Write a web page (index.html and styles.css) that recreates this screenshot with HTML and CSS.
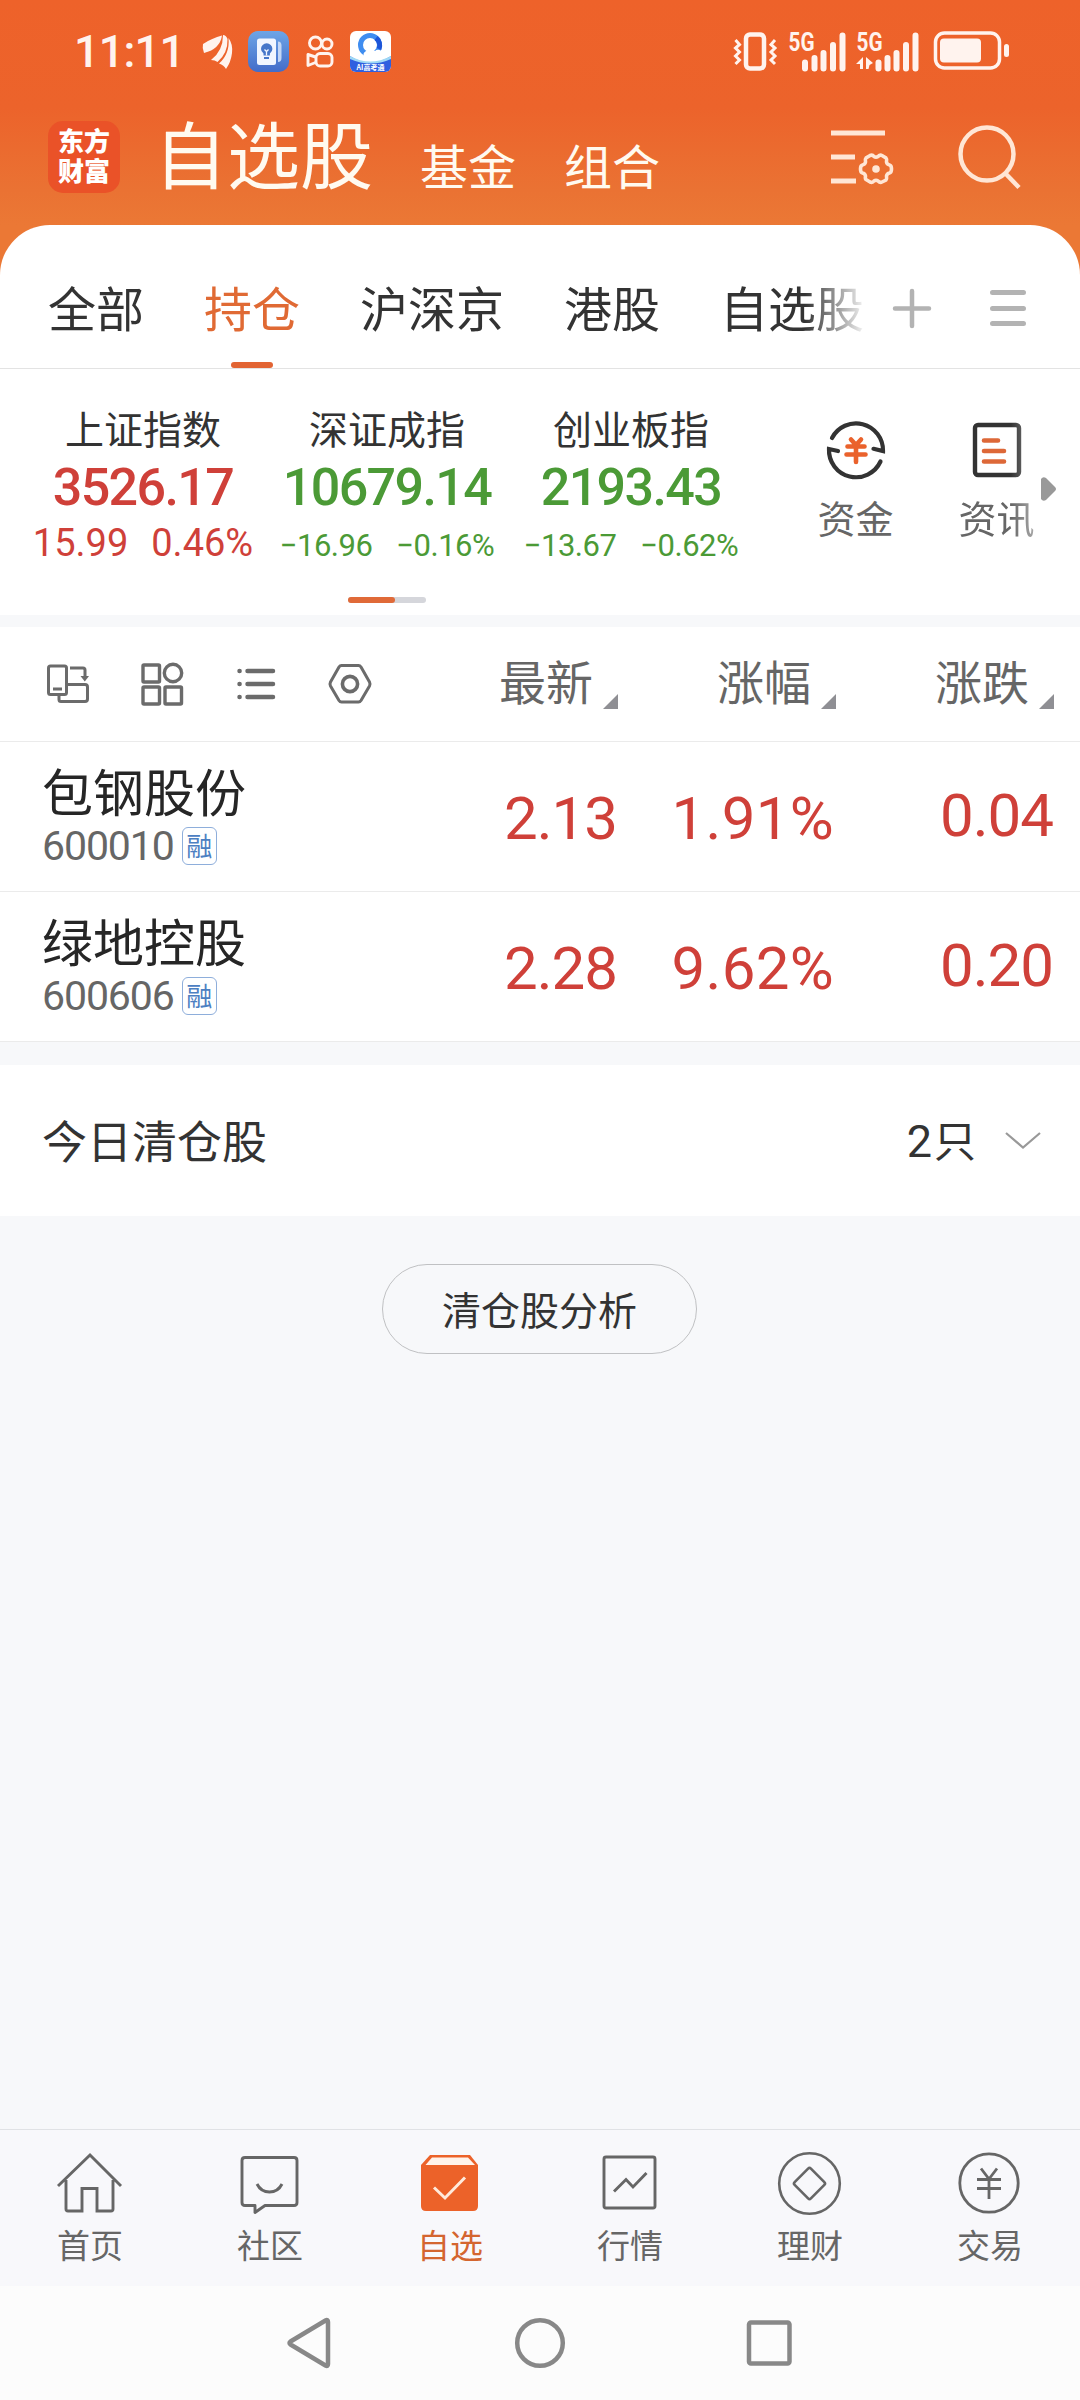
FILE: index.html
```html
<!DOCTYPE html>
<html lang="zh-CN">
<head>
  <meta charset="UTF-8" />
  <meta name="viewport" content="width=device-width, initial-scale=1" />
  <title>自选股</title>
  <link rel="stylesheet" href="styles.css">
</head>
<body>
  <header class="header">
    <div class="status-bar">
      <span class="time">11:11</span>
      <svg class="st-wing" width="30" height="36" viewBox="0 0 30 36" fill="#fff3ee">
        <path d="M0 10Q9 4 19 1.500Q17 15 1 19Q-1 14 0 10Z"/>
        <path d="M8 26Q20 17 20 1Q23 1 24.500 5Q25 19 14.500 28Q12 26 8 26Z"/>
        <path d="M16 29.500Q27 20 25.500 4Q30 10 29 19Q28 28 23 35Q21 31 16 29.500Z"/>
      </svg>
      <svg class="st-note" width="41" height="41" viewBox="0 0 41 41">
        <defs><linearGradient id="blue" x1="0" y1="0" x2="0" y2="1"><stop offset="0" stop-color="#6ea5e6"/><stop offset="1" stop-color="#426cc9"/></linearGradient></defs>
        <rect width="41" height="41" rx="10" fill="url(#blue)"/>
        <path d="M30 10.500q3.500 0 3.500 4v12.500q0 4-3.500 4z" fill="#c3d7f6"/>
        <rect x="9" y="7.500" width="19" height="26.500" rx="2.500" fill="#f1f6ff"/>
        <path d="M15.500 24.500v-2q-2.500-2-2.500-4.500a5.700 5.700 0 0 1 11.400 0q0 2.500-2.500 4.500v2zM16 26h5v2h-5z" fill="#4677c9"/>
        <path d="M16.500 18.500l2 2 2-2M18.500 20.500v4" stroke="#f1f6ff" stroke-width="1.300" fill="none"/>
      </svg>
      <svg class="st-cam" width="28" height="33" viewBox="0 0 28 33" fill="none" stroke="#fff3ee" stroke-width="2.900">
        <circle cx="9.500" cy="8" r="6"/><circle cx="21" cy="9" r="5"/>
        <rect x="10" y="18.500" width="16" height="12.500" rx="4"/>
        <path d="M9.500 22L2 19.500v11l7.500-3" stroke-linejoin="round"/>
      </svg>
      <svg class="st-ai" width="41" height="41" viewBox="0 0 41 41">
        <defs><clipPath id="aiBox"><rect width="41" height="41" rx="6"/></clipPath></defs>
        <g clip-path="url(#aiBox)">
          <rect width="41" height="41" fill="#fff"/>
          <path d="M0 25q20 13 41 0v16H0z" fill="#2f5fe0"/>
          <path d="M0 25q20 11 41 0v3q-20 9-41 0z" fill="#9fd8f5"/>
          <circle cx="20" cy="14" r="9.500" fill="none" stroke="#3f8df0" stroke-width="5"/>
          <path d="M26 7a9.500 9.500 0 0 1 3 11" fill="none" stroke="#1d55d8" stroke-width="5"/>
          <path d="M15 26a9 5 0 0 1 1-6 6 6 0 0 1 9 0 4 4 0 0 1 6 6z" fill="#fff"/>
        </g>
        <text x="20.500" y="38.500" text-anchor="middle" class="ai-text">AI高考通</text>
      </svg>
      <svg class="st-signal" width="276" height="41" viewBox="734 31 276 41" fill="none" stroke="#fff3ee">
        <rect x="746" y="34.500" width="18" height="34" rx="4" stroke-width="4.500"/>
        <path d="M735.500 40l4 4.500-4 3.500 4 4-4 4 4 4-4 4M775 40l-4 4.500 4 3.500-4 4 4 4-4 4 4 4" stroke-width="3"/>
        <path d="M805 62.500v6M814.500 58v10.500M823.500 53v15.500M833 45v23.500M842.500 35.500v33" stroke-width="6" stroke-linecap="round"/>
        <path d="M878.500 62.500v6M887.500 58v10.500M896.500 53v15.500M906 45v23.500M915.500 35.500v33" stroke-width="6" stroke-linecap="round"/>
        <path d="M856 64l7-7v12h-3v-5zM873 63l-7-6v12h2.500l1-4z" fill="#fff3ee" stroke="none"/>
        <rect x="935.500" y="33" width="64" height="35" rx="9" stroke-width="3.500"/>
        <rect x="940" y="38.500" width="41" height="24" rx="4" fill="#fff3ee" stroke="none"/>
        <rect x="1004" y="44" width="5" height="13" rx="2.500" fill="#fff3ee" stroke="none"/>
        <text x="788.500" y="50.500" textLength="26" lengthAdjust="spacingAndGlyphs" class="net">5G</text>
        <text x="856.500" y="50.500" textLength="26" lengthAdjust="spacingAndGlyphs" class="net">5G</text>
      </svg>
    </div>
    <div class="title-bar">
      <div class="logo"><span>东方</span><span>财富</span></div>
      <nav class="titles">
        <h1>自选股</h1>
        <span>基金</span>
        <span>组合</span>
      </nav>
      <svg class="ic-setting" width="64" height="58" viewBox="831 129 64 58" fill="none" stroke="#ffe6d5" stroke-width="5">
        <path d="M831 133h54M831 157h24M831 181h25"/>
        <path d="M870 155.500q2.500-1 4 1 2 1.500 4 0 2-2 4-1l4 2.500q1 1 .5 4 .5 2.500 3 3 2 .5 2 4t-2 4q-2.500.500-3 3 .5 3-.5 4l-4 2q-2 1-4-1-2-1.500-4 0-1.500 2-4 1l-4-2.500q-1-.5-.5-3.500-.5-2.500-3-3-2-.5-2-4t2-4q2.500-.5 3-3-.5-3 .5-4z" stroke-width="3.600"/>
        <circle cx="876" cy="169" r="3.800" fill="#ffe6d5" stroke="none"/>
      </svg>
      <svg class="ic-search" width="63" height="66" viewBox="958 124 63 66" fill="none" stroke="#ffe6d5" stroke-width="4.500">
        <circle cx="987" cy="154" r="26.500"/><path d="M1005 173l14 14.500"/>
      </svg>
    </div>
  </header>

  <main class="sheet">
    <div class="tabs">
      <div class="tab-list">
        <span>全部</span>
        <span class="active">持仓</span>
        <span>沪深京</span>
        <span>港股</span>
        <span>自选股</span>
      </div>
      <svg class="ic-plus" width="40" height="40" viewBox="0 0 40 40" stroke="#b3b3b3" stroke-width="4.500" stroke-linecap="round"><path d="M20 3v35M3 20.500h34"/></svg>
      <svg class="ic-menu" width="36" height="38" viewBox="0 0 36 38" stroke="#b3b3b3" stroke-width="5" stroke-linecap="round"><path d="M2.500 3.500h31M2.500 19.500h31M2.500 34.500h31"/></svg>
    </div>

    <section class="indices">
      <div class="index-list">
        <div class="index up">
          <div class="name">上证指数</div>
          <div class="value">3526.17</div>
          <div class="change big"><span>15.99</span><span>0.46%</span></div>
        </div>
        <div class="index down">
          <div class="name">深证成指</div>
          <div class="value">10679.14</div>
          <div class="change"><span>−16.96</span><span>−0.16%</span></div>
        </div>
        <div class="index down">
          <div class="name">创业板指</div>
          <div class="value">2193.43</div>
          <div class="change"><span>−13.67</span><span>−0.62%</span></div>
        </div>
      </div>
      <div class="shortcuts">
        <div class="shortcut">
          <svg width="60" height="62" viewBox="826 419 60 62" fill="none" stroke="#333" stroke-width="4.200" stroke-linecap="round">
            <path d="M832 438a27 27 0 0 1 51 13l-9.500-2.200"/>
            <path d="M880.500 461.500a27 27 0 0 1-51.500-12.500l9 2"/>
            <path d="M851 439.500l5 5.500 5-5.500M847.500 446.500h17M846.500 454.500h19M856 446v16" stroke="#ea622c" stroke-width="4.600"/>
          </svg>
          <span>资金</span>
        </div>
        <div class="shortcut fade">
          <svg width="60" height="62" viewBox="967 419 60 62" fill="none" stroke="#333" stroke-width="4.400" stroke-linecap="round">
            <rect x="975" y="425" width="44" height="50" rx="3"/>
            <path d="M984 440.500h14M984 451h20M984 461.500h20" stroke="#dd6838" stroke-width="4.600"/>
          </svg>
          <span>资讯</span>
        </div>
      </div>
      <svg class="ic-more" width="16" height="26" viewBox="0 0 16 26"><path d="M0 3q2-3 5-1l9 9q2 2 0 4l-9 9q-3 2-5-1z" fill="#999"/></svg>
      <div class="pager"><i></i></div>
    </section>

    <section class="stocks">
      <div class="row head">
        <div class="tools">
          <svg width="44" height="44" viewBox="46 662 44 44" fill="none" stroke="#6b6b6b" stroke-width="3">
            <rect x="48.500" y="666" width="18" height="28.500" rx="2"/>
            <path d="M53 689h9M66 684.500h19q2.500 0 2.500 2.500v12q0 2.500-2.500 2.500H61q-2 0-2-2v-5M70 668h13q2 0 2 2v8"/>
            <path d="M80.500 676h8.500l-4.200 5.500z" fill="#6b6b6b" stroke="none"/>
          </svg>
          <svg width="44" height="44" viewBox="140 662 44 44" fill="none" stroke="#6b6b6b" stroke-width="3.400">
            <rect x="143" y="665" width="16.500" height="17" rx="1"/>
            <rect x="143" y="687" width="16.500" height="17" rx="1"/>
            <rect x="165" y="687" width="16.500" height="17" rx="1"/>
            <circle cx="173" cy="673" r="8.700"/>
          </svg>
          <svg width="44" height="44" viewBox="234 662 44 44" fill="none" stroke="#6b6b6b" stroke-width="4.500" stroke-linecap="round">
            <path d="M247.500 671h25.500M247.500 684h25.500M247.500 697h25.500M239.500 671h.1M239.500 684h.1M239.500 697h.1"/>
          </svg>
          <svg width="44" height="44" viewBox="328 662 44 44" fill="none" stroke="#6b6b6b" stroke-width="3" stroke-linejoin="round">
            <path d="M341.500 665.500h17q1.500 0 2.500 1.500l8.500 15q1 2 0 4l-8.500 14.500q-1 1.500-2.500 1.500h-17q-1.500 0-2.500-1.500l-8.500-14.500q-1-2 0-4l8.500-15q1-1.500 2.500-1.500z"/>
            <circle cx="350" cy="684" r="7.600" stroke-width="3.600"/>
          </svg>
        </div>
        <div class="col">最新<i class="sort"></i></div>
        <div class="col">涨幅<i class="sort"></i></div>
        <div class="col">涨跌<i class="sort"></i></div>
      </div>
      <div class="row">
        <div class="stock">
          <div class="stock-name">包钢股份</div>
          <div class="stock-code">600010<span class="badge">融</span></div>
        </div>
        <div class="num">2.13</div>
        <div class="num rate">1.91%</div>
        <div class="num diff">0.04</div>
      </div>
      <div class="row">
        <div class="stock">
          <div class="stock-name">绿地控股</div>
          <div class="stock-code">600606<span class="badge">融</span></div>
        </div>
        <div class="num">2.28</div>
        <div class="num rate">9.62%</div>
        <div class="num diff">0.20</div>
      </div>
    </section>

    <section class="cleared">
      <span class="cleared-title">今日清仓股</span>
      <span class="cleared-count"><b>2</b>只</span>
      <svg width="36" height="20" viewBox="0 0 36 20" fill="none" stroke="#999" stroke-width="2.200"><path d="M1 2l17 14.500L35 2"/></svg>
    </section>
    <button class="analysis">清仓股分析</button>
  </main>

  <footer class="tabbar">
    <div class="item">
      <svg width="66" height="66" viewBox="57 2150 66 66" fill="none" stroke="#666" stroke-width="2.900">
        <path d="M58 2186l32-31 31 31M66 2180v29q0 2 2 2h14v-22.500h15V2211h14q2 0 2-2v-29"/>
      </svg>
      <span>首页</span>
    </div>
    <div class="item">
      <svg width="66" height="66" viewBox="237 2150 66 66" fill="none" stroke="#666" stroke-width="2.900" stroke-linejoin="round">
        <path d="M245 2157.500h49q3 0 3 3v42q0 3-3 3h-29l-10 7v-7h-10q-3 0-3-3v-42q0-3 3-3z"/>
        <path d="M257 2184q4 8 12.500 8t12.500-8"/>
      </svg>
      <span>社区</span>
    </div>
    <div class="item active">
      <svg width="66" height="66" viewBox="417 2150 66 66">
        <path d="M430 2155h40l8 10v41q0 5-5 5h-47q-5 0-5-5v-41z" fill="#ec6229"/>
        <path d="M432 2157.500h36l7 7.500h-49.500z" fill="#fff3ea"/>
        <path d="M434 2187.500l11 10.500 20-20.500" fill="none" stroke="#ffeadb" stroke-width="3"/>
      </svg>
      <span>自选</span>
    </div>
    <div class="item">
      <svg width="66" height="66" viewBox="597 2150 66 66" fill="none" stroke="#666" stroke-width="2.900">
        <rect x="604" y="2157" width="51" height="51" rx="2"/>
        <path d="M614 2191.500l12-12 7 7.500 13.500-14"/>
      </svg>
      <span>行情</span>
    </div>
    <div class="item">
      <svg width="66" height="66" viewBox="777 2150 66 66" fill="none" stroke="#666" stroke-width="2.600">
        <circle cx="809.500" cy="2183.500" r="30.300"/>
        <rect x="798" y="2172" width="23" height="23" rx="2" transform="rotate(45 809.500 2183.500)"/>
      </svg>
      <span>理财</span>
    </div>
    <div class="item">
      <svg width="66" height="66" viewBox="957 2150 66 66" fill="none" stroke="#666" stroke-width="2.800">
        <circle cx="989" cy="2183" r="29.200"/>
        <path d="M981 2168.500l8 10.500 8-10.500M977 2179.500h24M977 2188.500h24M989 2179v20"/>
      </svg>
      <span>交易</span>
    </div>
  </footer>
  <div class="sysbar">
    <svg width="46" height="52" viewBox="286 2317 46 52"><path d="M325.500 2320.500q2.500-1.500 2.500 1.500v42q0 3-2.500 1.500l-35-21q-2-1.500 0-3z"/></svg>
    <svg width="52" height="52" viewBox="514 2317 52 52"><circle cx="540" cy="2343" r="22.800"/></svg>
    <svg width="48" height="52" viewBox="745 2317 48 52"><rect x="749" y="2322.500" width="40.500" height="41" rx="2"/></svg>
  </div>
</body>
</html>
```

FILE: styles.css
```css
* {
  box-sizing: border-box;
}
body {
  margin: 0;
  height: 2400px;
  display: flex;
  flex-direction: column;
  background: #f7f8fa;
  color: #333;
  font-family: "Noto Sans CJK SC", sans-serif;
  overflow: hidden;
}
svg {
  display: block;
  flex: none;
  overflow: visible;
}

/* header */
.header {
  height: 275px;
  background: linear-gradient(#ee622a 0, #ec632b 108px, #ea7233 190px, #eb7835 225px);
}
.status-bar {
  height: 103px;
  display: flex;
  align-items: center;
  padding: 0 70px 0 74px;
  color: #fff3ee;
}
.time {
  width: 129px;
  font: 500 45px/50px Roboto, sans-serif;
  letter-spacing: -0.8px;
}
.st-note {
  margin-left: 15px;
}
.st-cam {
  margin-left: 17px;
}
.st-ai {
  margin-left: 16px;
}
.st-signal {
  margin-left: auto;
}
.ai-text {
  font: bold 7px "Noto Sans CJK SC", sans-serif;
  fill: #fff;
}
.net {
  font: 700 25px Roboto, sans-serif;
  fill: #fff3ee;
  stroke: none;
}
.title-bar {
  display: flex;
  align-items: flex-start;
  padding: 18px 59px 0 48px;
}
.logo {
  width: 72px;
  height: 72px;
  padding-top: 4px;
  border-radius: 15px;
  background: #ea5228;
  color: #fff;
  font-size: 26px;
  font-weight: 900;
  line-height: 30px;
  text-align: center;
}
.logo span {
  display: block;
}
.titles {
  display: flex;
  align-items: flex-start;
  margin: -6px 0 0 34px;
  color: #fffaf0;
  font-size: 48px;
  line-height: 72px;
}
.titles h1 {
  margin: 0 47px 0 0;
  font-size: 73px;
  font-weight: 400;
  line-height: 72px;
}
.titles span {
  margin: 13px 48px 0 0;
}
.ic-setting {
  margin: 8px 0 0 auto;
}
.ic-search {
  margin: 3px 0 0 63px;
}

/* sheet */
.sheet {
  margin-top: -50px;
  flex: 1;
}
.tabs {
  height: 144px;
  display: flex;
  background: #fff;
  border-bottom: 1px solid #e3e3e3;
  border-radius: 50px 50px 0 0;
}
.tab-list {
  width: 863px;
  height: 143px;
  display: flex;
  gap: 60px;
  padding-left: 48px;
  overflow: hidden;
  white-space: nowrap;
  font-size: 48px;
  line-height: 162px;
  -webkit-mask-image: linear-gradient(90deg, #000 805px, transparent 868px);
  mask-image: linear-gradient(90deg, #000 805px, transparent 868px);
}
.tab-list span {
  flex: none;
}
.tab-list .active {
  position: relative;
  color: #e06a34;
}
.tab-list .active::after {
  content: "";
  position: absolute;
  left: 27px;
  top: 137px;
  width: 42px;
  height: 6px;
  border-radius: 3px;
  background: #e26433;
}
.ic-plus {
  margin: 63px 0 0 29px;
}
.ic-menu {
  margin: 64px 0 0 58px;
}

.indices {
  position: relative;
  height: 246px;
  display: flex;
  background: #fff;
}
.index-list {
  display: flex;
  padding: 38px 0 0 21px;
}
.index {
  width: 244px;
  text-align: center;
}
.index .name {
  font-size: 39px;
  line-height: 40px;
}
.index .value {
  margin-top: 14px;
  font: 500 52px/54px Roboto, sans-serif;
  letter-spacing: -1.6px;
}
.index .change {
  height: 40px;
  margin-top: 9px;
  display: flex;
  justify-content: center;
  gap: 24px;
  font: 400 31px/44px Roboto, sans-serif;
  letter-spacing: -0.5px;
}
.index .change.big {
  gap: 23px;
  font-size: 38px;
  line-height: 38px;
  letter-spacing: 0;
}
.up {
  color: #cf4039;
}
.up .name,
.down .name {
  color: #333;
}
.down {
  color: #4b9a36;
}
.shortcuts {
  display: flex;
  padding: 50px 0 0 32px;
}
.shortcut {
  width: 141px;
  display: flex;
  flex-direction: column;
  align-items: center;
  gap: 16px;
  color: #666;
  font-size: 38px;
  line-height: 40px;
}
.fade {
  -webkit-mask-image: linear-gradient(90deg, #000 85px, rgba(0, 0, 0, 0.5) 112px);
  mask-image: linear-gradient(90deg, #000 85px, rgba(0, 0, 0, 0.5) 112px);
}
.ic-more {
  position: absolute;
  right: 23px;
  top: 107px;
}
.pager {
  position: absolute;
  left: 348px;
  top: 228px;
  width: 78px;
  height: 6px;
  border-radius: 3px;
  background: #d5d6db;
}
.pager i {
  display: block;
  width: 47px;
  height: 6px;
  border-radius: 3px;
  background: #e06a38;
}

/* stock list */
.stocks {
  margin-top: 12px;
  background: #fff;
}
.row {
  height: 150px;
  display: grid;
  grid-template-columns: 400px 218px 218px 218px;
  border-bottom: 1px solid #ebebeb;
}
.row.head {
  height: 115px;
  color: #666;
  font-size: 47px;
  line-height: 105px;
}
.tools {
  display: flex;
  gap: 50px;
  padding: 35px 0 0 46px;
}
.col {
  display: flex;
  justify-content: flex-end;
}
.sort {
  width: 15px;
  height: 15px;
  margin: 67px 0 0 10px;
  background: #8f8f94;
  clip-path: polygon(100% 0, 100% 100%, 0 100%);
}
.stock {
  padding: 23px 0 0 42px;
}
.stock-name {
  color: #262626;
  font-size: 51px;
  line-height: 50px;
}
.stock-code {
  display: flex;
  align-items: center;
  margin-top: 10px;
  color: #666;
  font: 400 41px/42px Roboto, sans-serif;
  letter-spacing: -1.1px;
}
.badge {
  width: 35px;
  height: 38px;
  margin-left: 8px;
  border: 1.5px solid #8eaedb;
  border-radius: 6px;
  color: #4c80c2;
  font: 400 26px/33px "Noto Sans CJK SC", sans-serif;
  letter-spacing: 0;
  text-align: center;
}
.num {
  color: #cf4039;
  font: 400 60px/60px Roboto, sans-serif;
  letter-spacing: -1px;
  text-align: right;
  padding: 47px 1px 0 0;
}
.num.rate {
  padding-right: 2px;
  letter-spacing: 0.3px;
}
.num.diff {
  padding: 44px 1px 0 0;
}

.cleared {
  height: 151px;
  margin-top: 23px;
  display: flex;
  align-items: center;
  padding: 0 39px 0 42px;
  background: #fff;
  font-size: 45px;
}
.cleared-title {
  flex: 1;
  margin-top: -2px;
  line-height: 46px;
}
.cleared-count {
  display: flex;
  align-items: center;
  gap: 2px;
  margin: -3px 29px 0 0;
  font-size: 42px;
  line-height: 46px;
}
.cleared-count b {
  margin-top: 5px;
  font: 400 45px/46px Roboto, sans-serif;
}
.analysis {
  display: block;
  width: 315px;
  height: 90px;
  margin: 48px 0 0 382px;
  padding: 0 0 3px;
  border: 1px solid #c0c1c3;
  border-radius: 45px;
  background: #f7f8fa;
  color: #333;
  font: 400 39px/84px "Noto Sans CJK SC", sans-serif;
}

/* bottom */
.tabbar {
  height: 157px;
  display: flex;
  background: #f8f8fb;
  border-top: 1px solid #e0e2e5;
}
.item {
  width: 180px;
  display: flex;
  flex-direction: column;
  align-items: center;
  padding-top: 20px;
  color: #666;
  font-size: 33px;
  line-height: 34px;
}
.item span {
  margin-top: 11px;
}
.item.active {
  color: #d4652f;
}
.sysbar {
  height: 114px;
  display: flex;
  align-items: center;
  padding-left: 286px;
  background: #fcfcfc;
}
.sysbar svg {
  fill: none;
  stroke: #888;
  stroke-width: 4.5px;
  stroke-linejoin: round;
}
.sysbar svg + svg {
  margin-left: 182px;
}
.sysbar svg:last-child {
  margin-left: 179px;
}
```
